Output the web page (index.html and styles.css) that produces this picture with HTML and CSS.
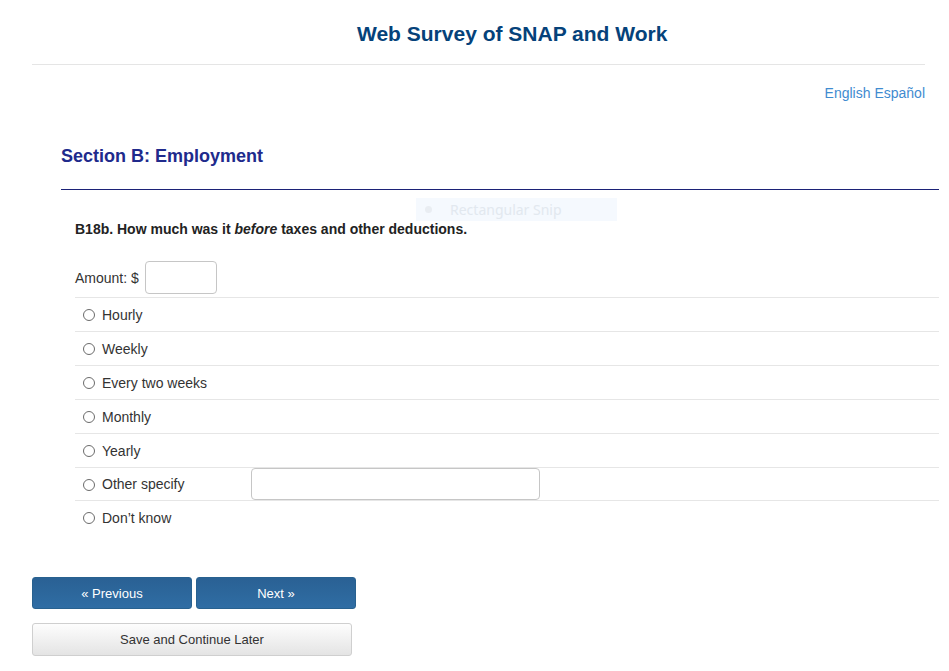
FILE: index.html
```html
<!DOCTYPE html>
<html>
<head>
    <meta charset="utf-8">
    <title>Web Survey of SNAP and Work</title>
    <link rel="stylesheet" href="styles.css">
</head>
<body>
    <div class="page">
        <div class="page-head">
            <h1>Web Survey of SNAP and Work</h1>
        </div>
        <div class="lang"><a href="#">English</a> <a href="#">Español</a></div>

        <div class="section">
            <h2>Section B: Employment</h2>
            <div class="rule"></div>
            <p class="question">B18b. How much was it <em>before</em> taxes and other deductions.</p>
            <div class="amount">
                <label for="amt">Amount: $</label>
                <input type="text" id="amt" class="box box-sm">
            </div>
            <ul class="options">
                <li><label><input type="radio" name="per"><span>Hourly</span></label></li>
                <li><label><input type="radio" name="per"><span>Weekly</span></label></li>
                <li><label><input type="radio" name="per"><span>Every two weeks</span></label></li>
                <li><label><input type="radio" name="per"><span>Monthly</span></label></li>
                <li><label><input type="radio" name="per"><span>Yearly</span></label></li>
                <li class="short"><label class="other"><input type="radio" name="per"><span>Other specify</span></label><input type="text" class="box box-lg"></li>
                <li><label><input type="radio" name="per"><span>Don’t know</span></label></li>
            </ul>
        </div>

        <div class="nav">
            <button class="btn btn-blue">« Previous</button>
            <button class="btn btn-blue">Next »</button>
        </div>
        <button class="btn btn-save">Save and Continue Later</button>
    </div>

    <div class="snip"><span class="dot"></span>Rectangular Snip</div>
</body>
</html>
```

FILE: styles.css
```css
*{margin:0;padding:0;box-sizing:border-box;list-style:none;}
body{font-family:"Liberation Sans",Arial,sans-serif;font-size:14px;color:#333;background:#fff;}
.page{padding:0 0 20px 32px;}

.page-head{height:65px;margin-right:24px;border-bottom:1px solid #e5e5e5;padding:22px 0 0 325px;}
.page-head h1{font-size:21px;line-height:24px;color:#05427a;font-weight:bold;}

.lang{margin:18px 24px 0 0;text-align:right;line-height:20px;}
.lang a{color:#3f8bd0;text-decoration:none;}

.section{margin-left:29px;margin-right:10px;}
.section h2{margin-top:42px;font-size:18px;line-height:22px;color:#202a8c;}
.rule{margin-top:22px;border-top:1px solid #1c2277;}
.question{margin-top:29px;padding-left:14px;font-weight:bold;line-height:20px;color:#222;}
.question em{font-style:italic;}

.amount{margin-top:22px;padding-left:14px;display:flex;align-items:center;gap:6px;}
.box{border:1px solid #c6c6c6;border-radius:4px;height:33px;background:#fff;font:inherit;}
.box-sm{width:72px;}
.box-lg{width:289px;height:32px;}

.options{margin:3px 0 0 14px;}
.options li{height:34px;border-top:1px solid #e6e6e6;display:flex;align-items:center;padding-left:8px;}
.options li.short{height:33px;}
.options label{display:flex;align-items:center;gap:7px;}
.options label.other{width:168px;}
.options input[type=radio]{-webkit-appearance:none;appearance:none;width:12px;height:12px;border:1px solid #6b6b6b;border-radius:50%;background:#fff;margin:1px 0 0 0;}

.nav{margin-top:43px;display:flex;gap:4px;}
.btn{font-family:"Liberation Sans",Arial,sans-serif;font-size:13px;border-radius:3px;cursor:pointer;}
.btn-blue{width:160px;height:32px;color:#fff;border:1px solid #28618f;background:linear-gradient(#2a6194,#2f6da4);}
.btn-save{display:block;margin-top:14px;width:320px;height:33px;color:#333;border:1px solid #cfcfcf;background:linear-gradient(#fdfdfd,#e4e4e4);}

.snip{position:absolute;left:416px;top:198px;width:201px;height:23px;background:#f5f9fe;color:#e2e8ef;font-family:"Noto Sans",sans-serif;font-size:14px;line-height:23px;padding-left:34px;}
.snip .dot{position:absolute;left:9px;top:8px;width:7px;height:7px;border-radius:50%;background:#e9edf2;}
```
